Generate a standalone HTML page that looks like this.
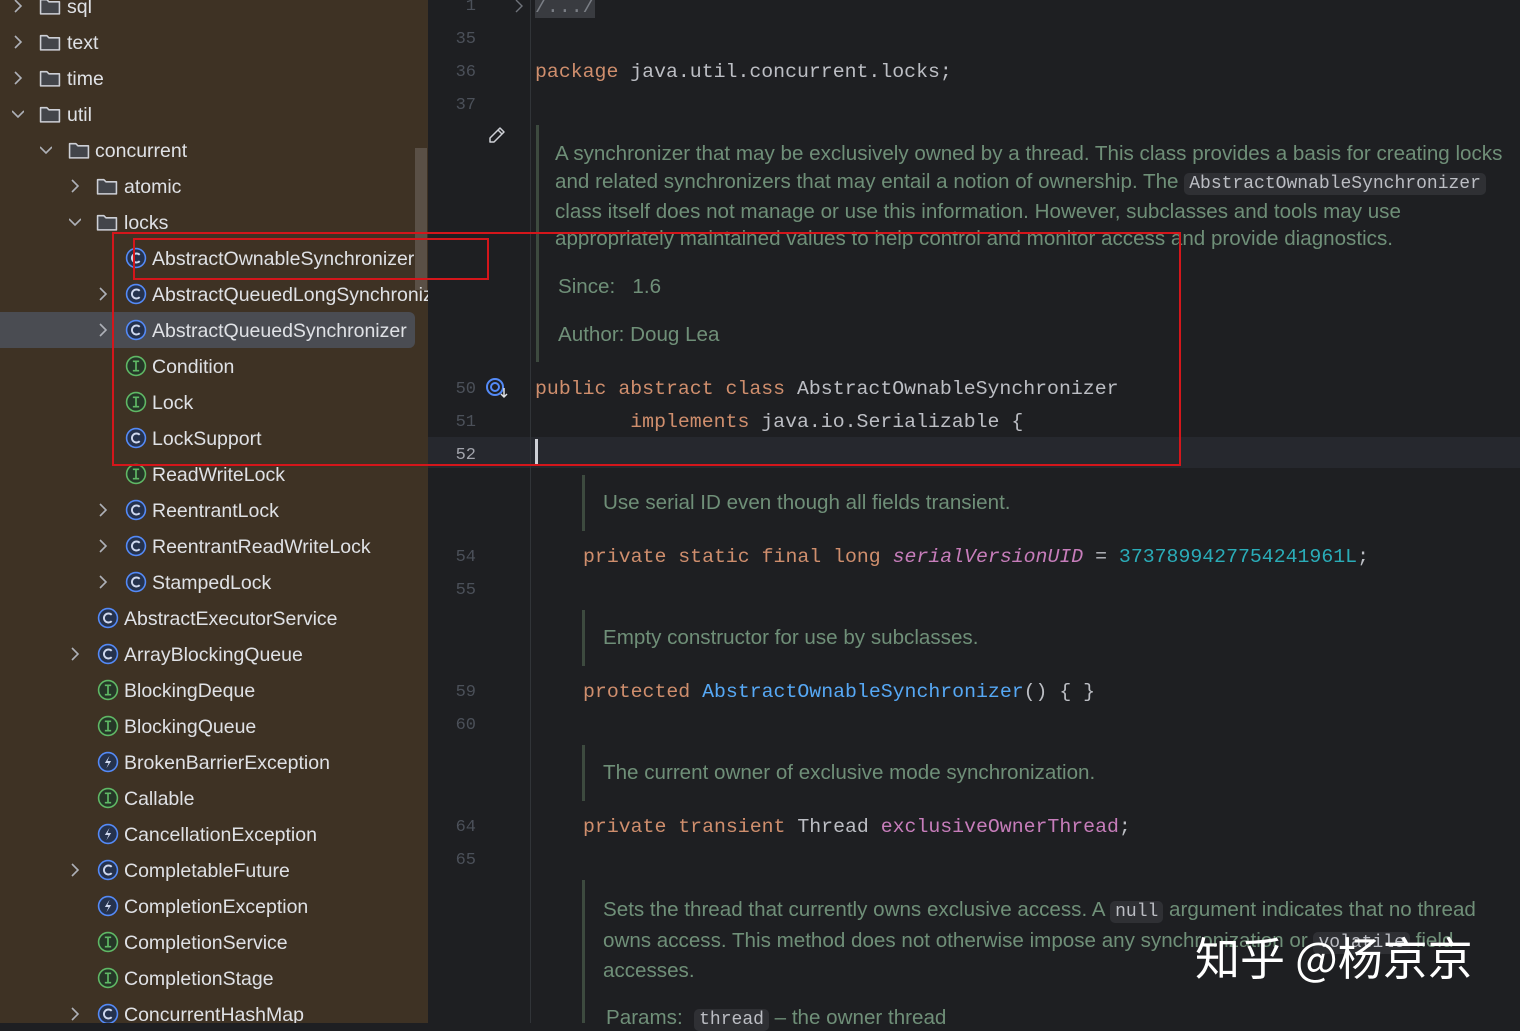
<!DOCTYPE html>
<html><head><meta charset="utf-8"><style>
*{margin:0;padding:0;box-sizing:border-box}
body{width:1520px;height:1023px;overflow:hidden;background:#1e1f22;position:relative;font-family:"Liberation Sans","Noto Sans CJK SC",sans-serif}
#side{position:absolute;left:0;top:0;width:428px;height:1023px;background:#3e3224;overflow:hidden}
.r{position:absolute;height:36px;line-height:36px;font-size:19.5px;color:#dfe1e5;white-space:nowrap}
.ar{position:absolute;top:0;width:12px;height:36px}
.ic{position:absolute;top:7px;width:22px;height:22px}
.t{position:absolute;top:1px}
.ln{position:absolute;left:430px;width:46px;text-align:right;font-family:"Liberation Mono",monospace;font-size:17px;color:#4b5059}
.code{position:absolute;font-family:"Liberation Mono",monospace;font-size:19.85px;color:#bcbec4;white-space:pre}
.k{color:#cf8e6d}.m{color:#56a8f5}.n{color:#2aacb8}.p{color:#c77dbb}
.doc{position:absolute;font-size:20.6px;color:#6f8f78;white-space:nowrap}
.bar{position:absolute;width:3px;background:#3d4a3f}
.cc{font-family:"Liberation Mono",monospace;background:#2f3034;color:#bcbec4;border-radius:5px;padding:1px 5px;font-size:18px}
</style></head><body>
<div id="side">
<svg width="0" height="0" style="position:absolute"><defs>
<symbol id="chev" viewBox="0 0 12 36"><path d="M3 12 L9 18 L3 24" fill="none" stroke="#aeb1b8" stroke-width="1.6"/></symbol>
<symbol id="chevd" viewBox="0 0 12 36"><path d="M0 15 L6 21 L12 15" fill="none" stroke="#aeb1b8" stroke-width="1.6"/></symbol>
<symbol id="fold" viewBox="0 0 21 21"><path d="M1.5 4.5 h6 l2 2 h10 v11.5 h-18 z" fill="#43454a" stroke="#ced0d6" stroke-width="1.5" stroke-linejoin="round"/></symbol>
<symbol id="cls" viewBox="0 0 21 21"><circle cx="10.5" cy="10.5" r="9" fill="#25324d" stroke="#548af7" stroke-width="1.5"/><path d="M14 7.5 A4.3 4.3 0 1 0 14 13.5" fill="none" stroke="#cfd8ee" stroke-width="1.8"/></symbol>
<symbol id="itf" viewBox="0 0 21 21"><circle cx="10.5" cy="10.5" r="9" fill="#253627" stroke="#5fb865" stroke-width="1.5"/><path d="M7.5 6 h6 M10.5 6 v9 M7.5 15 h6" stroke="#5fb865" stroke-width="1.6"/></symbol>
<symbol id="exc" viewBox="0 0 21 21"><circle cx="10.5" cy="10.5" r="9" fill="#25324d" stroke="#548af7" stroke-width="1.5"/><path d="M12 4.5 L7.5 11.5 h3.5 L9 16.5 L13.5 9.5 h-3.5 z" fill="#cfd8ee"/></symbol>
</defs></svg>
<div style="position:absolute;left:0;top:312px;width:415px;height:36px;background:#4a4c52;border-radius:0 6px 6px 0"></div>
<div style="position:absolute;left:415px;top:148px;width:12px;height:142px;background:#5a5046"></div>

<div class="r" style="top:-12px"><svg class="ar" style="left:12px"><use href="#chev"/></svg><svg class="ic" style="left:39px"><use href="#fold"/></svg><span class="t" style="left:67px">sql</span></div>
<div class="r" style="top:24px"><svg class="ar" style="left:12px"><use href="#chev"/></svg><svg class="ic" style="left:39px"><use href="#fold"/></svg><span class="t" style="left:67px">text</span></div>
<div class="r" style="top:60px"><svg class="ar" style="left:12px"><use href="#chev"/></svg><svg class="ic" style="left:39px"><use href="#fold"/></svg><span class="t" style="left:67px">time</span></div>
<div class="r" style="top:96px"><svg class="ar" style="left:12px"><use href="#chevd"/></svg><svg class="ic" style="left:39px"><use href="#fold"/></svg><span class="t" style="left:67px">util</span></div>
<div class="r" style="top:132px"><svg class="ar" style="left:40px"><use href="#chevd"/></svg><svg class="ic" style="left:68px"><use href="#fold"/></svg><span class="t" style="left:95px">concurrent</span></div>
<div class="r" style="top:168px"><svg class="ar" style="left:69px"><use href="#chev"/></svg><svg class="ic" style="left:96px"><use href="#fold"/></svg><span class="t" style="left:124px">atomic</span></div>
<div class="r" style="top:204px"><svg class="ar" style="left:69px"><use href="#chevd"/></svg><svg class="ic" style="left:96px"><use href="#fold"/></svg><span class="t" style="left:124px">locks</span></div>
<div class="r" style="top:240px"><svg class="ic" style="left:125px"><use href="#cls"/></svg><span class="t" style="left:152px">AbstractOwnableSynchronizer</span></div>
<div class="r" style="top:276px"><svg class="ar" style="left:97px"><use href="#chev"/></svg><svg class="ic" style="left:125px"><use href="#cls"/></svg><span class="t" style="left:152px">AbstractQueuedLongSynchronizer</span></div>
<div class="r" style="top:312px"><svg class="ar" style="left:97px"><use href="#chev"/></svg><svg class="ic" style="left:125px"><use href="#cls"/></svg><span class="t" style="left:152px">AbstractQueuedSynchronizer</span></div>
<div class="r" style="top:348px"><svg class="ic" style="left:125px"><use href="#itf"/></svg><span class="t" style="left:152px">Condition</span></div>
<div class="r" style="top:384px"><svg class="ic" style="left:125px"><use href="#itf"/></svg><span class="t" style="left:152px">Lock</span></div>
<div class="r" style="top:420px"><svg class="ic" style="left:125px"><use href="#cls"/></svg><span class="t" style="left:152px">LockSupport</span></div>
<div class="r" style="top:456px"><svg class="ic" style="left:125px"><use href="#itf"/></svg><span class="t" style="left:152px">ReadWriteLock</span></div>
<div class="r" style="top:492px"><svg class="ar" style="left:97px"><use href="#chev"/></svg><svg class="ic" style="left:125px"><use href="#cls"/></svg><span class="t" style="left:152px">ReentrantLock</span></div>
<div class="r" style="top:528px"><svg class="ar" style="left:97px"><use href="#chev"/></svg><svg class="ic" style="left:125px"><use href="#cls"/></svg><span class="t" style="left:152px">ReentrantReadWriteLock</span></div>
<div class="r" style="top:564px"><svg class="ar" style="left:97px"><use href="#chev"/></svg><svg class="ic" style="left:125px"><use href="#cls"/></svg><span class="t" style="left:152px">StampedLock</span></div>
<div class="r" style="top:600px"><svg class="ic" style="left:97px"><use href="#cls"/></svg><span class="t" style="left:124px">AbstractExecutorService</span></div>
<div class="r" style="top:636px"><svg class="ar" style="left:69px"><use href="#chev"/></svg><svg class="ic" style="left:97px"><use href="#cls"/></svg><span class="t" style="left:124px">ArrayBlockingQueue</span></div>
<div class="r" style="top:672px"><svg class="ic" style="left:97px"><use href="#itf"/></svg><span class="t" style="left:124px">BlockingDeque</span></div>
<div class="r" style="top:708px"><svg class="ic" style="left:97px"><use href="#itf"/></svg><span class="t" style="left:124px">BlockingQueue</span></div>
<div class="r" style="top:744px"><svg class="ic" style="left:97px"><use href="#exc"/></svg><span class="t" style="left:124px">BrokenBarrierException</span></div>
<div class="r" style="top:780px"><svg class="ic" style="left:97px"><use href="#itf"/></svg><span class="t" style="left:124px">Callable</span></div>
<div class="r" style="top:816px"><svg class="ic" style="left:97px"><use href="#exc"/></svg><span class="t" style="left:124px">CancellationException</span></div>
<div class="r" style="top:852px"><svg class="ar" style="left:69px"><use href="#chev"/></svg><svg class="ic" style="left:97px"><use href="#cls"/></svg><span class="t" style="left:124px">CompletableFuture</span></div>
<div class="r" style="top:888px"><svg class="ic" style="left:97px"><use href="#exc"/></svg><span class="t" style="left:124px">CompletionException</span></div>
<div class="r" style="top:924px"><svg class="ic" style="left:97px"><use href="#itf"/></svg><span class="t" style="left:124px">CompletionService</span></div>
<div class="r" style="top:960px"><svg class="ic" style="left:97px"><use href="#itf"/></svg><span class="t" style="left:124px">CompletionStage</span></div>
<div class="r" style="top:996px"><svg class="ar" style="left:69px"><use href="#chev"/></svg><svg class="ic" style="left:97px"><use href="#cls"/></svg><span class="t" style="left:124px">ConcurrentHashMap</span></div>
</div>

<!-- editor -->
<div style="position:absolute;left:428px;top:437px;width:1092px;height:31px;background:#26282e"></div>
<div style="position:absolute;left:530px;top:0;width:1px;height:1023px;background:#313438"></div>
<div style="position:absolute;left:535px;top:439px;width:3px;height:25px;background:#ced0d6"></div>

<div class="ln" style="top:-3px">1</div>
<div class="ln" style="top:30px">35</div>
<div class="ln" style="top:63px">36</div>
<div class="ln" style="top:96px">37</div>
<div class="ln" style="top:380px">50</div>
<div class="ln" style="top:413px">51</div>
<div class="ln" style="top:446px;color:#a1a3ab">52</div>
<div class="ln" style="top:548px">54</div>
<div class="ln" style="top:581px">55</div>
<div class="ln" style="top:683px">59</div>
<div class="ln" style="top:716px">60</div>
<div class="ln" style="top:818px">64</div>
<div class="ln" style="top:851px">65</div>

<svg style="position:absolute;left:512px;top:-3px" width="14" height="20"><path d="M4 3 L10 9 L4 15" fill="none" stroke="#6f737a" stroke-width="1.4"/></svg>
<svg style="position:absolute;left:486px;top:124px" width="22" height="22"><path d="M4 18 L4 14 L14 4 L18 8 L8 18 Z M12 6 L16 10" fill="none" stroke="#ced0d6" stroke-width="1.5" stroke-linejoin="round"/></svg>
<svg style="position:absolute;left:485px;top:377px" width="26" height="24"><circle cx="10" cy="10" r="8" fill="none" stroke="#548af7" stroke-width="2"/><circle cx="10" cy="10" r="4" fill="none" stroke="#548af7" stroke-width="2"/><path d="M19 11 v9 M16 17 l3 3 l3 -3" fill="none" stroke="#dfe1e5" stroke-width="1.5"/></svg>

<div class="code" style="left:535px;top:-5px"><span style="background:#393b40;color:#7a7e85">/.../</span></div>
<div class="code" style="left:535px;top:60px"><span class="k">package</span> java.util.concurrent.locks;</div>

<div class="bar" style="left:536px;top:125px;height:237px"></div>
<div class="doc" style="left:555px;top:142px">A synchronizer that may be exclusively owned by a thread. This class provides a basis for creating locks</div>
<div class="doc" style="left:555px;top:170px">and related synchronizers that may entail a notion of ownership. The <span class="cc">AbstractOwnableSynchronizer</span></div>
<div class="doc" style="left:555px;top:200px">class itself does not manage or use this information. However, subclasses and tools may use</div>
<div class="doc" style="left:555px;top:227px">appropriately maintained values to help control and monitor access and provide diagnostics.</div>
<div class="doc" style="left:558px;top:275px">Since:&nbsp;&nbsp; 1.6</div>
<div class="doc" style="left:558px;top:323px">Author: Doug Lea</div>

<div class="code" style="left:535px;top:377px"><span class="k">public abstract class</span> AbstractOwnableSynchronizer</div>
<div class="code" style="left:535px;top:410px">        <span class="k">implements</span> java.io.Serializable {</div>

<div class="bar" style="left:582px;top:475px;height:56px"></div>
<div class="doc" style="left:603px;top:491px">Use serial ID even though all fields transient.</div>
<div class="code" style="left:583px;top:545px"><span class="k">private static final long</span> <i class="p">serialVersionUID</i> = <span class="n">3737899427754241961L</span>;</div>

<div class="bar" style="left:582px;top:610px;height:56px"></div>
<div class="doc" style="left:603px;top:626px">Empty constructor for use by subclasses.</div>
<div class="code" style="left:583px;top:680px"><span class="k">protected</span> <span class="m">AbstractOwnableSynchronizer</span>() { }</div>

<div class="bar" style="left:582px;top:745px;height:56px"></div>
<div class="doc" style="left:603px;top:761px">The current owner of exclusive mode synchronization.</div>
<div class="code" style="left:583px;top:815px"><span class="k">private transient</span> Thread <span class="p">exclusiveOwnerThread</span>;</div>

<div class="bar" style="left:582px;top:880px;height:143px"></div>
<div class="doc" style="left:603px;top:898px">Sets the thread that currently owns exclusive access. A <span class="cc">null</span> argument indicates that no thread</div>
<div class="doc" style="left:603px;top:929px">owns access. This method does not otherwise impose any synchronization or <span class="cc">volatile</span> field</div>
<div class="doc" style="left:603px;top:959px">accesses.</div>
<div class="doc" style="left:606px;top:1006px">Params:&nbsp; <span class="cc">thread</span> – the owner thread</div>

<!-- red boxes -->
<div style="position:absolute;left:112px;top:232px;width:1069px;height:234px;border:2px solid #d4161b"></div>
<div style="position:absolute;left:133px;top:238px;width:356px;height:42px;border:2px solid #d4161b"></div>

<div style="position:absolute;left:1195px;top:928px;font-size:45px;color:#fff;font-family:'Noto Sans CJK SC',sans-serif;white-space:nowrap;line-height:56px">知乎 @杨京京</div>
</body></html>
